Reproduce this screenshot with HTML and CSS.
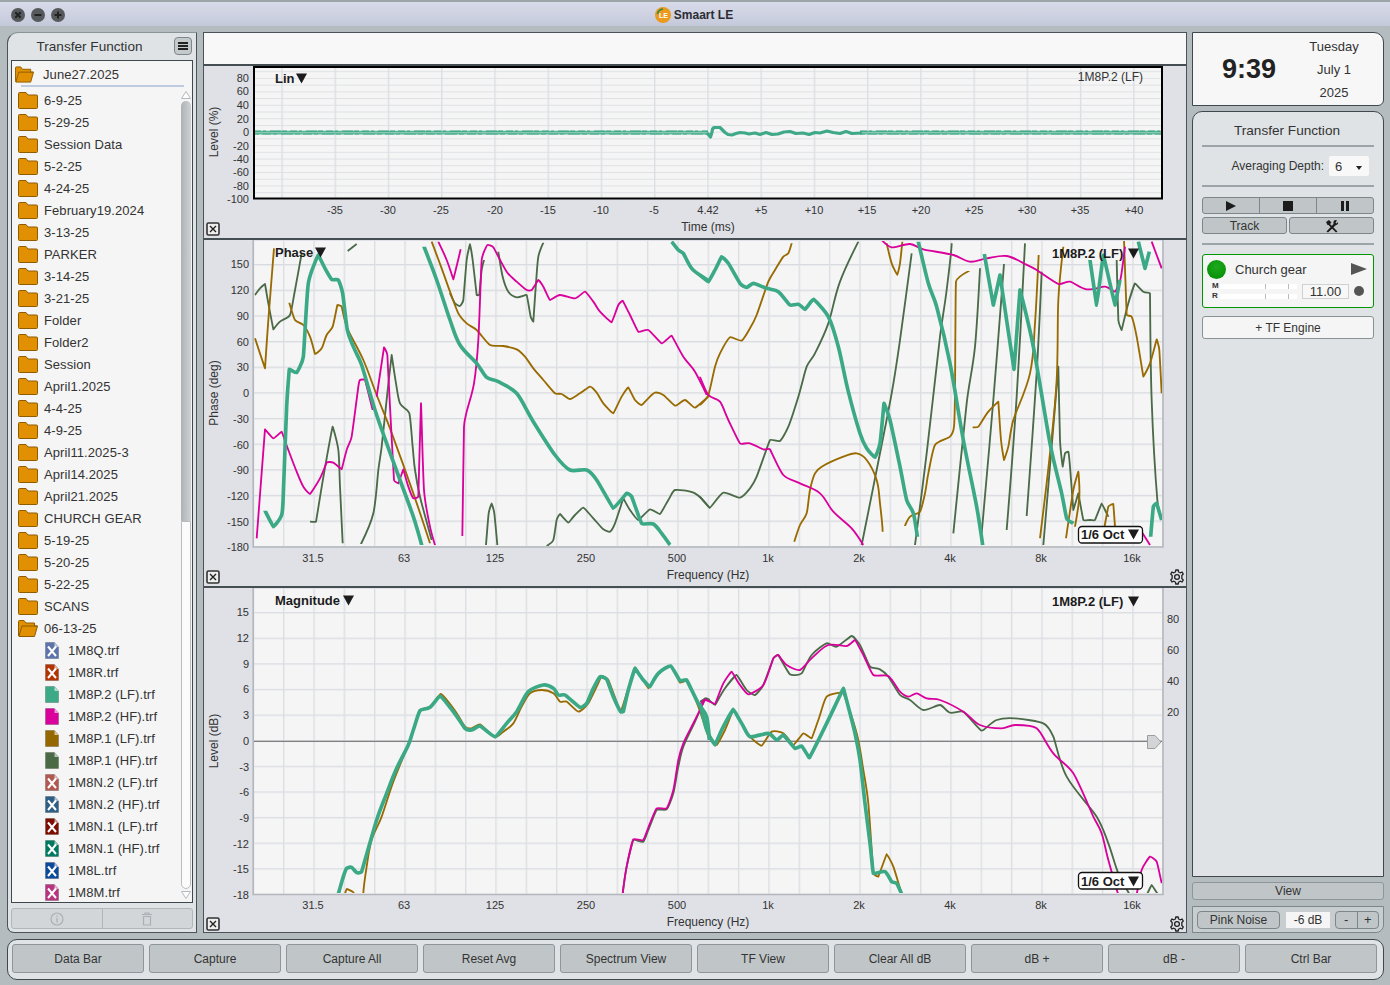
FILE: index.html
```html
<!DOCTYPE html>
<html lang="en">
<head>
<meta charset="utf-8">
<title>Smaart LE</title>
<link rel="stylesheet" href="styles.css">
</head>
<body>
<svg class="defs" width="0" height="0" aria-hidden="true">
  <defs>
    <symbol id="folder" viewBox="0 0 20 17"><path d="M.5 3V1.500Q.5.500 1.500.500H8L10 3H18.500Q19.500 3 19.500 4V15.500Q19.500 16.500 18.500 16.500H1.500Q.5 16.500 .5 15.500Z" fill="#e09000" stroke="#8f5c00"/></symbol>
    <symbol id="folder-open" viewBox="0 0 20 17"><path d="M.5 15V1.500Q.5.500 1.500.500H6L8 3H16.500V6H19.500L16.500 16.500H1Z" fill="#e09000" stroke="#8f5c00"/><path d="M1 16L4 6H19.500" fill="none" stroke="#8f5c00"/></symbol>
    <symbol id="file" viewBox="0 0 14 17"><path d="M.5.500H9.500L13.500 5V16.500H.5Z" fill="currentColor" stroke="#0003"/><path d="M9.500.500V5H13.500Z" fill="#fff9"/></symbol>
    <symbol id="filex" viewBox="0 0 14 17"><path d="M.5.500H9.500L13.500 5V16.500H.5Z" fill="currentColor" stroke="#0003"/><path d="M9.500.500V5H13.500Z" fill="#fff9"/><path d="M3 4.500L11 14M11 4.500L3 14" stroke="#fff" stroke-width="2" fill="none"/></symbol>
    <symbol id="gear" viewBox="0 0 16 16"><path d="M6.800 1H9.200L9.600 3Q10.500 3.300 11.200 3.800L13.100 3L14.300 5.100L12.800 6.400Q13 7.200 12.800 9.600L14.300 10.900L13.100 13L11.200 12.200Q10.500 12.700 9.600 13L9.200 15H6.800L6.400 13Q5.500 12.700 4.800 12.200L2.900 13L1.700 10.900L3.200 9.600Q3 8.800 3.200 6.400L1.700 5.100L2.900 3L4.800 3.800Q5.500 3.300 6.400 3Z" fill="none" stroke="#222" stroke-width="1.300" stroke-linejoin="round"/><circle cx="8" cy="8" r="2.400" fill="none" stroke="#222" stroke-width="1.300"/></symbol>
    <symbol id="xbox" viewBox="0 0 14 14"><rect x="1" y="1" width="12" height="12" rx="1.500" fill="#eee" stroke="#333" stroke-width="1.600"/><path d="M4 4L10 10M10 4L4 10" stroke="#222" stroke-width="1.400"/></symbol>
    <symbol id="tri" viewBox="0 0 12 11"><path d="M0 0H12L6 11Z" fill="#1c1c1c"/></symbol>
    <pattern id="v-freq" patternUnits="userSpaceOnUse" x="283" y="0" width="30.33" height="10"><rect width="1.400" height="10" fill="#dcdee3"/></pattern>
    <pattern id="h-phase" patternUnits="userSpaceOnUse" x="0" y="264" width="10" height="25.65"><rect width="10" height="1.400" fill="#d8dbe0"/></pattern>
    <pattern id="h-mag" patternUnits="userSpaceOnUse" x="0" y="612" width="10" height="25.62"><rect width="10" height="1.400" fill="#dcdee3"/></pattern>
    <pattern id="h-time" patternUnits="userSpaceOnUse" x="0" y="71.200" width="10" height="6.720"><rect width="10" height="1" fill="#dfe1e4"/></pattern>
    <pattern id="v-time" patternUnits="userSpaceOnUse" x="281.300" y="0" width="53.240" height="10"><rect width="1.400" height="10" fill="#dcdee3"/></pattern>
    <clipPath id="clip-phase"><rect x="254" y="241" width="908" height="305"/></clipPath>
    <clipPath id="clip-mag"><rect x="254" y="589" width="908" height="304"/></clipPath>
  </defs>
</svg>

<header class="titlebar">
  <div class="lights">
    <svg class="light" viewBox="0 0 14 14"><circle cx="7" cy="7" r="7" fill="#565a5c"/><path d="M4.300 4.300L9.700 9.700M9.700 4.300L4.300 9.700" stroke="#222" stroke-width="2"/></svg>
    <svg class="light" viewBox="0 0 14 14"><circle cx="7" cy="7" r="7" fill="#565a5c"/><path d="M3.500 7H10.500" stroke="#222" stroke-width="2"/></svg>
    <svg class="light" viewBox="0 0 14 14"><circle cx="7" cy="7" r="7" fill="#565a5c"/><path d="M3.500 7H10.500M7 3.500V10.500" stroke="#222" stroke-width="2"/></svg>
  </div>
  <div class="app-title">
    <svg class="logo" viewBox="0 0 16 16"><circle cx="8" cy="8" r="8" fill="#eb9a1c"/><path d="M2.500 7Q3.500 2.500 8 2" fill="none" stroke="#2e8a4a" stroke-width="1.600"/><text x="8.500" y="11" class="logo-text">LE</text></svg>
    <span>Smaart LE</span>
  </div>
</header>

<main class="workspace">
  <aside class="browser">
    <div class="browser-head">
      <h2 class="browser-title">Transfer Function</h2>
      <button class="menu-btn" aria-label="Menu"><i></i><i></i><i></i></button>
    </div>
    <div class="listbox">
      <div class="current"><svg class="ico-folder"><use href="#folder-open"/></svg><span>June27.2025</span></div>
      <div class="rows">
        <div class="row"><svg class="ico-folder"><use href="#folder"/></svg>6-9-25</div>
        <div class="row"><svg class="ico-folder"><use href="#folder"/></svg>5-29-25</div>
        <div class="row"><svg class="ico-folder"><use href="#folder"/></svg>Session Data</div>
        <div class="row"><svg class="ico-folder"><use href="#folder"/></svg>5-2-25</div>
        <div class="row"><svg class="ico-folder"><use href="#folder"/></svg>4-24-25</div>
        <div class="row"><svg class="ico-folder"><use href="#folder"/></svg>February19.2024</div>
        <div class="row"><svg class="ico-folder"><use href="#folder"/></svg>3-13-25</div>
        <div class="row"><svg class="ico-folder"><use href="#folder"/></svg>PARKER</div>
        <div class="row"><svg class="ico-folder"><use href="#folder"/></svg>3-14-25</div>
        <div class="row"><svg class="ico-folder"><use href="#folder"/></svg>3-21-25</div>
        <div class="row"><svg class="ico-folder"><use href="#folder"/></svg>Folder</div>
        <div class="row"><svg class="ico-folder"><use href="#folder"/></svg>Folder2</div>
        <div class="row"><svg class="ico-folder"><use href="#folder"/></svg>Session</div>
        <div class="row"><svg class="ico-folder"><use href="#folder"/></svg>April1.2025</div>
        <div class="row"><svg class="ico-folder"><use href="#folder"/></svg>4-4-25</div>
        <div class="row"><svg class="ico-folder"><use href="#folder"/></svg>4-9-25</div>
        <div class="row"><svg class="ico-folder"><use href="#folder"/></svg>April11.2025-3</div>
        <div class="row"><svg class="ico-folder"><use href="#folder"/></svg>April14.2025</div>
        <div class="row"><svg class="ico-folder"><use href="#folder"/></svg>April21.2025</div>
        <div class="row"><svg class="ico-folder"><use href="#folder"/></svg>CHURCH GEAR</div>
        <div class="row"><svg class="ico-folder"><use href="#folder"/></svg>5-19-25</div>
        <div class="row"><svg class="ico-folder"><use href="#folder"/></svg>5-20-25</div>
        <div class="row"><svg class="ico-folder"><use href="#folder"/></svg>5-22-25</div>
        <div class="row"><svg class="ico-folder"><use href="#folder"/></svg>SCANS</div>
        <div class="row"><svg class="ico-folder"><use href="#folder-open"/></svg>06-13-25</div>
        <div class="row file"><svg class="ico-file f1"><use href="#filex"/></svg>1M8Q.trf</div>
        <div class="row file"><svg class="ico-file f2"><use href="#filex"/></svg>1M8R.trf</div>
        <div class="row file"><svg class="ico-file f3"><use href="#file"/></svg>1M8P.2 (LF).trf</div>
        <div class="row file"><svg class="ico-file f4"><use href="#file"/></svg>1M8P.2 (HF).trf</div>
        <div class="row file"><svg class="ico-file f5"><use href="#file"/></svg>1M8P.1 (LF).trf</div>
        <div class="row file"><svg class="ico-file f6"><use href="#file"/></svg>1M8P.1 (HF).trf</div>
        <div class="row file"><svg class="ico-file f7"><use href="#filex"/></svg>1M8N.2 (LF).trf</div>
        <div class="row file"><svg class="ico-file f8"><use href="#filex"/></svg>1M8N.2 (HF).trf</div>
        <div class="row file"><svg class="ico-file f9"><use href="#filex"/></svg>1M8N.1 (LF).trf</div>
        <div class="row file"><svg class="ico-file f10"><use href="#filex"/></svg>1M8N.1 (HF).trf</div>
        <div class="row file"><svg class="ico-file f11"><use href="#filex"/></svg>1M8L.trf</div>
        <div class="row file"><svg class="ico-file f12"><use href="#filex"/></svg>1M8M.trf</div>
      </div>
      <div class="scrollbar">
        <svg class="sc-arrow" viewBox="0 0 10 8"><path d="M5 .5L9.500 7.500H.5Z" fill="#fff" stroke="#b5babd"/></svg>
        <div class="sc-thumb"></div>
        <div class="sc-track"></div>
        <svg class="sc-arrow" viewBox="0 0 10 8"><path d="M5 7.500L9.500 .5H.5Z" fill="#fff" stroke="#b5babd"/></svg>
      </div>
    </div>
    <div class="browser-actions">
      <div class="action"><svg class="act-ico" viewBox="0 0 14 14"><circle cx="7" cy="7" r="6" fill="none" stroke="#aab0b3" stroke-width="1.200"/><path d="M7 6V10.500M7 3.400V4.800" stroke="#aab0b3" stroke-width="1.300"/></svg></div>
      <div class="action"><svg class="act-ico" viewBox="0 0 14 14"><path d="M2 2.500H12M5 2.500V1H9V2.500M3.500 4.500V13H10.500V4.500Z" fill="none" stroke="#aab0b3" stroke-width="1.200"/></svg></div>
    </div>
  </aside>

  <section class="charts">
    <div class="strip"></div>

    <div class="chart chart-time">
      <svg class="plot" viewBox="204 66 983 172" width="983" height="172">
        <rect x="254" y="67" width="908" height="131" fill="#f5f5f5"/>
        <rect x="254" y="67" width="908" height="131" fill="url(#h-time)"/>
        <rect x="254" y="67" width="908" height="131" fill="url(#v-time)"/>
        <path class="t-band" d="M254 132.600H708M860 132.600H1162"/>
        <path class="t-noise" d="M254 131.200H708M860 131.200H1162"/>
        <path class="t-noise2" d="M254 134H708M860 134H1162"/>
        <path class="t-core" d="M254 132.700H708M860 132.700H1162"/>
        <path class="t-jag" d="M707 133L709 135L710.500 137L712 132L712.500 129L714 127.500L720 127.500L722 129.500L725 132.500L728 134.500L732 135L736 133.500L740 132.500L745 133L749 134L755 133L760 134.500L766 132.500L772 134.500L778 134L784 132L790 131.500L796 133.500L803 133L809 134.500L815 132.500L820 133L827 131L833 132.500L840 133.500L846 131.500L852 133.500L862 133"/>
        <rect x="254" y="67" width="908" height="131.500" fill="none" stroke="#000" stroke-width="2"/>
        <g class="ax end">
          <text x="249" y="82">80</text><text x="249" y="95">60</text><text x="249" y="109">40</text><text x="249" y="123">20</text><text x="249" y="136">0</text><text x="249" y="150">-20</text><text x="249" y="163">-40</text><text x="249" y="176">-60</text><text x="249" y="190">-80</text><text x="249" y="203">-100</text>
        </g>
        <g class="ax mid">
          <text x="335" y="214">-35</text><text x="388" y="214">-30</text><text x="441" y="214">-25</text><text x="495" y="214">-20</text><text x="548" y="214">-15</text><text x="601" y="214">-10</text><text x="654" y="214">-5</text><text x="708" y="214">4.42</text><text x="761" y="214">+5</text><text x="814" y="214">+10</text><text x="867" y="214">+15</text><text x="921" y="214">+20</text><text x="974" y="214">+25</text><text x="1027" y="214">+30</text><text x="1080" y="214">+35</text><text x="1134" y="214">+40</text>
        </g>
        <text class="title mid" x="708" y="231">Time (ms)</text>
        <text class="title mid" transform="translate(218 132) rotate(-90)">Level (%)</text>
        <text class="head" x="275" y="83">Lin</text>
        <use href="#tri" x="296" y="73" width="11" height="11"/>
        <text class="small-head end" x="1143" y="81">1M8P.2 (LF)</text>
        <use href="#xbox" x="206" y="222" width="14" height="14"/>
      </svg>
    </div>

    <div class="chart chart-phase">
      <svg class="plot" viewBox="204 240 983 346" width="983" height="346">
        <rect x="254" y="241" width="908" height="305" fill="#f5f5f5"/>
        <rect x="254" y="241" width="908" height="305" fill="url(#h-phase)"/>
        <rect x="254" y="241" width="908" height="305" fill="url(#v-freq)"/>
        <path d="M253.200 240V547H1163V240" fill="none" stroke="#b4b8bd" stroke-width="1.600"/>
        <g clip-path="url(#clip-phase)">
          <g transform="translate(250 240) scale(.33333)">
            <g class="c-d">
              <polyline points="15,165 30,145 45,132 55,190 70,268 90,245 120,225 135,150 155,40"/>
              <polyline points="293,33 320,12"/>
              <polyline points="180,845 198,845 222,700 248,560 265,630 270,740 278,910"/>
              <polyline points="333,912 370,820 385,690 395,620 412,460 425,345 438,430 450,490 478,520 488,620 495,690 510,770 545,900"/>
              <polyline points="600,160 615,190 630,198 640,180 650,60 660,12 668,60 680,165 688,165 695,90 702,60"/>
              <polyline points="745,35 758,110 775,155 800,172 830,165 842,230 850,245 858,130 865,50 880,8"/>
              <polyline points="708,915 716,820 725,790 733,820 742,915"/>
              <polyline points="890,918 910,900 920,840 930,822 955,848 975,825 1000,803 1030,835 1060,868 1080,875 1095,850 1120,775 1140,810 1165,840 1200,808 1230,822 1255,780 1275,750 1335,760 1380,805"/>
            </g>
            <g class="c-b">
              <polyline points="15,295 45,385 55,240 72,25"/>
              <polyline points="118,188 135,240 160,255 180,290 195,342 215,325 230,285 248,260 262,195 275,200 292,265 340,360 380,465 420,565 490,760 540,910"/>
              <polyline points="545,5 575,85 600,155 625,220 650,250 680,270 720,315 760,318 800,328 825,350 850,385 880,420 915,460 935,462 960,477 990,460 1020,440 1040,458 1060,490 1090,520 1115,470 1135,442 1155,480 1175,495 1195,475 1215,458 1240,465 1275,497 1305,480 1335,503 1380,465"/>
            </g>
            <g class="c-m">
              <polyline points="20,895 45,568 70,595 95,575 115,630 140,695 160,740 180,762 210,715 230,668 250,668 275,688 290,630 305,590 325,440 330,420 345,420 368,510"/>
              <polyline points="380,470 402,322 412,345 420,500 432,720 445,730 460,688 475,740 490,775 505,770 513,490 522,750 540,860 555,915"/>
              <polyline points="565,5 590,60 610,118 622,70 632,28"/>
              <polyline points="637,888 642,560 650,515 672,430 685,300 695,60 712,15 730,22 770,95 800,125 830,150 845,150 865,120 880,140 900,180 930,165 975,175 1005,155 1030,185 1050,215 1085,247 1105,195 1118,182 1140,225 1165,275 1195,270 1235,310 1265,287 1300,350 1335,395 1370,465"/>
            </g>
            <g class="c-g">
              <polyline points="45,812 70,860 95,825 100,760 110,500 118,388 140,398 160,350 175,130 205,45 225,85 245,118 265,120 278,160 292,270 310,320 335,375 375,510 410,610 450,720 490,830 515,915"/>
              <polyline points="522,20 560,120 600,240 630,315 680,370 710,412 745,425 800,460 850,545 915,645 960,690 1010,690 1040,720 1090,805 1130,760 1145,770 1175,850 1210,852 1235,880 1260,915"/>
              <polyline points="1265,5 1285,30 1300,40 1325,85 1360,112 1380,125"/>
            </g>
          </g>
          <g transform="translate(700 240) scale(.33333)">
            <g class="c-d">
              <polyline points="0,770 30,803 70,758 120,773 150,745 170,710 210,600 240,603 265,560 295,470 320,380 345,340 385,250 420,125 475,5"/>
              <polyline points="485,915 530,690 575,460 600,300 635,40"/>
              <polyline points="645,915 680,640 720,290 740,150 755,10"/>
              <polyline points="760,880 800,490 825,320 840,85"/>
              <polyline points="845,880 880,480 912,72"/>
              <polyline points="920,870 950,470 975,10"/>
              <polyline points="980,828 1010,400 1025,95"/>
              <polyline points="1030,915 1060,560 1075,380 1080,600 1088,680 1095,640 1105,635 1110,680 1120,810 1135,760 1150,840 1170,840 1185,840 1205,790 1225,830"/>
              <polyline points="1250,60 1255,240 1265,270 1285,190 1305,130 1330,155 1350,160 1355,480 1372,780 1385,840"/>
            </g>
            <g class="c-b">
              <polyline points="0,495 25,465 45,380 60,340 90,292 125,302 150,265 170,225 205,125 225,90 250,50 265,40 275,10"/>
              <polyline points="283,905 300,855 320,820 330,750 345,700 365,680 430,650 470,640 500,660 530,720 540,790 548,875"/>
              <polyline points="560,10 575,70 592,105 600,70 607,5"/>
              <polyline points="615,858 630,830 660,815 675,760 685,700 705,615 750,590 762,560 765,460 768,125 808,92"/>
              <polyline points="818,562 835,560 865,515 895,485 903,600 912,660 925,620 940,540 990,400 1005,250 1016,45"/>
              <polyline points="1020,895 1050,640 1070,420 1075,180 1090,20"/>
              <polyline points="1098,895 1120,750 1135,695 1138,770 1125,860"/>
              <polyline points="1210,880 1225,800 1240,792 1245,860"/>
              <polyline points="1272,0 1280,225 1295,230 1310,290 1330,410 1350,370 1370,298 1378,330 1385,460"/>
            </g>
            <g class="c-m">
              <polyline points="0,410 25,465 60,485 85,540 120,610 150,610 190,628 210,628 250,705 300,730 360,760 400,815 455,865 490,915"/>
              <polyline points="545,0 575,22 630,12 670,28 760,45 810,65 860,55 920,48 975,72 1010,90 1075,132 1110,125 1160,148 1215,140 1245,155 1262,115 1275,20"/>
              <polyline points="1355,5 1385,85"/>
              <polyline points="1315,860 1350,915"/>
            </g>
            <g class="c-g">
              <polyline points="0,105 25,125 45,90 65,50 85,70 120,130 140,142 160,130 200,145 235,155 270,195 295,193 315,208 340,178 385,230 415,320 445,455 480,580 500,625 525,652 540,610 552,490 570,540 600,680 620,780 640,820 652,890"/>
              <polyline points="655,5 685,130 710,200 750,370 790,600 830,800 848,915"/>
              <polyline points="853,42 880,195 900,105 942,388 960,150 1000,320 1050,610 1085,760 1100,835 1120,850"/>
              <polyline points="1170,60 1190,195 1210,45 1245,195 1260,120"/>
              <polyline points="1315,5 1335,85 1348,35"/>
              <polyline points="1352,890 1360,800 1370,790 1385,840"/>
            </g>
          </g>
        </g>
        <g class="ax end">
          <text x="249" y="268">150</text><text x="249" y="294">120</text><text x="249" y="320">90</text><text x="249" y="346">60</text><text x="249" y="371">30</text><text x="249" y="397">0</text><text x="249" y="423">-30</text><text x="249" y="449">-60</text><text x="249" y="474">-90</text><text x="249" y="500">-120</text><text x="249" y="526">-150</text><text x="249" y="551">-180</text>
        </g>
        <g class="ax mid">
          <text x="313" y="562">31.5</text><text x="404" y="562">63</text><text x="495" y="562">125</text><text x="586" y="562">250</text><text x="677" y="562">500</text><text x="768" y="562">1k</text><text x="859" y="562">2k</text><text x="950" y="562">4k</text><text x="1041" y="562">8k</text><text x="1132" y="562">16k</text>
        </g>
        <text class="title mid" x="708" y="579">Frequency (Hz)</text>
        <text class="title mid" transform="translate(218 393) rotate(-90)">Phase (deg)</text>
        <text class="head" x="275" y="257">Phase</text>
        <use href="#tri" x="315" y="247" width="11" height="11"/>
        <text class="head" x="1052" y="258">1M8P.2 (LF)</text>
        <use href="#tri" x="1128" y="248" width="11" height="11"/>
        <rect class="badge" x="1078.500" y="526.500" width="64" height="16.500" rx="3.500"/>
        <text class="head" x="1081" y="539">1/6 Oct</text>
        <use href="#tri" x="1128" y="529" width="11" height="11"/>
        <use href="#xbox" x="206" y="570" width="14" height="14"/>
        <use href="#gear" x="1169" y="569" width="16" height="16"/>
      </svg>
    </div>

    <div class="chart chart-mag">
      <svg class="plot" viewBox="204 588 983 344" width="983" height="344">
        <rect x="254" y="589" width="908" height="305" fill="#f5f5f5"/>
        <rect x="254" y="589" width="908" height="305" fill="url(#h-mag)"/>
        <rect x="254" y="589" width="908" height="305" fill="url(#v-freq)"/>
        <path d="M253.200 588V894.500H1163V588" fill="none" stroke="#b4b8bd" stroke-width="1.600"/>
        <path d="M254 741.300H1162" stroke="#666" stroke-width="1" fill="none"/>
        <g clip-path="url(#clip-mag)">
          <g transform="translate(250 590) scale(.33333)">
            <g class="c-b">
              <polyline points="285,912 290,897 308,905 312,912"/>
              <polyline points="340,912 350,830 365,750 395,680 430,575 475,465 490,420 510,360 540,350 572,312 612,358 645,410 665,415 690,403 735,442 760,425 790,400 815,350 840,310 875,300 910,310 930,335 950,335 985,365 1015,340 1055,258 1075,270 1112,368 1155,232 1195,295 1225,250 1262,228 1290,278 1310,272 1345,350 1378,450"/>
            </g>
            <g class="c-d"><polyline points="1118,912 1130,830 1150,750 1180,755 1195,720 1220,660 1250,658 1270,610 1285,530 1300,470 1335,395 1365,325 1380,330"/></g>
            <g class="c-m"><polyline points="1118,912 1130,830 1150,748 1180,750 1200,700 1220,655 1250,655 1270,600 1285,510 1300,460 1335,390 1365,330 1380,335"/></g>
            <g class="c-g"><polyline points="265,912 280,860 290,835 305,832 320,848 335,845 380,690 410,610 440,535 475,465 490,420 510,362 540,352 570,318 610,365 645,415 665,420 690,408 735,440 770,400 800,365 835,305 880,285 910,295 925,315 945,315 990,352 1010,340 1030,295 1050,260 1070,268 1090,320 1112,365 1120,365 1135,300 1155,235 1180,270 1200,290 1225,250 1262,228 1290,272 1310,270 1345,340 1370,380 1378,450"/></g>
          </g>
          <g transform="translate(700 590) scale(.33333)">
            <g class="c-b"><polyline points="0,355 25,430 50,465 75,420 100,358 125,400 150,440 185,467 215,425 250,430 280,465 310,430 335,445 355,390 380,320 430,310 470,430 490,540 505,640 520,850 535,860 560,792 580,830 605,912"/></g>
            <g class="c-d">
              <polyline points="0,335 20,325 45,345 75,295 110,255 140,300 165,315 190,285 220,205 235,195 270,253 305,250 335,195 380,160 410,170 455,138 480,165 510,230 540,238 565,260 600,315 630,330 670,360 720,345 750,368 790,365 845,422 890,390 945,385 1030,400 1060,440 1100,560 1190,680 1225,760 1255,850 1290,915"/>
              <polyline points="1340,915 1355,885 1375,915"/>
            </g>
            <g class="c-m">
              <polyline points="0,345 15,328 45,342 70,280 95,245 120,285 145,313 190,285 220,205 235,195 260,225 300,240 340,200 385,165 440,168 465,150 490,195 520,255 565,258 600,305 625,320 650,310 680,325 720,330 790,365 840,405 905,415 945,405 1010,415 1060,490 1120,550 1180,680 1205,730 1225,810 1255,915"/>
              <polyline points="1310,915 1325,840 1350,800 1370,815 1385,880"/>
            </g>
            <g class="c-g"><polyline points="0,340 20,420 45,465 70,410 100,358 125,400 150,440 205,430 230,450 250,435 285,475 305,468 328,503 380,400 430,295 450,370 465,430 480,510 495,640 510,760 520,850 555,845 575,875 590,880 605,912"/></g>
          </g>
        </g>
        <g class="ax end">
          <text x="249" y="616">15</text><text x="249" y="642">12</text><text x="249" y="668">9</text><text x="249" y="693">6</text><text x="249" y="719">3</text><text x="249" y="745">0</text><text x="249" y="771">-3</text><text x="249" y="796">-6</text><text x="249" y="822">-9</text><text x="249" y="848">-12</text><text x="249" y="873">-15</text><text x="249" y="899">-18</text>
        </g>
        <g class="ax">
          <text x="1167" y="623">80</text><text x="1167" y="654">60</text><text x="1167" y="685">40</text><text x="1167" y="716">20</text>
        </g>
        <g class="ax mid">
          <text x="313" y="909">31.5</text><text x="404" y="909">63</text><text x="495" y="909">125</text><text x="586" y="909">250</text><text x="677" y="909">500</text><text x="768" y="909">1k</text><text x="859" y="909">2k</text><text x="950" y="909">4k</text><text x="1041" y="909">8k</text><text x="1132" y="909">16k</text>
        </g>
        <text class="title mid" x="708" y="926">Frequency (Hz)</text>
        <text class="title mid" transform="translate(218 741) rotate(-90)">Level (dB)</text>
        <text class="head" x="275" y="605">Magnitude</text>
        <use href="#tri" x="343" y="595" width="11" height="11"/>
        <text class="head" x="1052" y="606">1M8P.2 (LF)</text>
        <use href="#tri" x="1128" y="596" width="11" height="11"/>
        <path d="M1147.500 735.500H1155L1161 742L1155 748.500H1147.500Z" fill="#d2d4d6" stroke="#9a9da0"/>
        <rect class="badge" x="1078.500" y="872.500" width="64" height="16.500" rx="3.500"/>
        <text class="head" x="1081" y="886">1/6 Oct</text>
        <use href="#tri" x="1128" y="876" width="11" height="11"/>
        <use href="#xbox" x="206" y="917" width="14" height="14"/>
        <use href="#gear" x="1169" y="916" width="16" height="16"/>
      </svg>
    </div>
  </section>

  <aside class="side">
    <div class="clock">
      <div class="time">9:39</div>
      <div class="date"><span>Tuesday</span><span>July 1</span><span>2025</span></div>
    </div>
    <div class="tf-panel">
      <h2 class="tf-title">Transfer Function</h2>
      <div class="depth">
        <span>Averaging Depth:</span>
        <div class="select"><span>6</span><svg class="caret" viewBox="0 0 6 4"><path d="M0 0H6L3 4Z" fill="#222"/></svg></div>
      </div>
      <div class="transport">
        <button class="seg" aria-label="Play"><svg class="t-ico" viewBox="0 0 10 10"><path d="M0 0L10 5L0 10Z" fill="#1c1c1c"/></svg></button>
        <button class="seg" aria-label="Stop"><svg class="t-ico" viewBox="0 0 10 10"><path d="M0 0H10V10H0Z" fill="#1c1c1c"/></svg></button>
        <button class="seg" aria-label="Pause"><svg class="t-ico" viewBox="0 0 10 10"><path d="M1 0H4V10H1ZM6 0H9V10H6Z" fill="#1c1c1c"/></svg></button>
      </div>
      <div class="track-row">
        <button class="btn-sm">Track</button>
        <button class="btn-sm" aria-label="Tools"><svg class="tool-ico" viewBox="0 0 14 14"><path d="M1 3L4 1L6.500 3.500L5 5L12.500 12.500L11 13.500L3.500 6L2.500 6ZM9 1.500Q11 .5 12 1.500L10.500 3.500L11.500 4.500L13 3Q13.500 5.500 11 6L3 13.500L1.500 12.500L8.500 5Q8 3 9 1.500Z" fill="#1c1c1c"/></svg></button>
      </div>
      <div class="engine">
        <div class="engine-top">
          <span class="led"></span>
          <span class="engine-name">Church gear</span>
          <svg class="engine-play" viewBox="0 0 16 12"><path d="M0 0L16 6L0 12Z" fill="#555"/></svg>
        </div>
        <div class="engine-bottom">
          <div class="meters">
            <div class="meter"><b>M</b><i></i></div>
            <div class="meter"><b>R</b><i></i></div>
          </div>
          <div class="value">11.00</div>
          <span class="dot"></span>
        </div>
      </div>
      <button class="add-engine">+ TF Engine</button>
    </div>
    <button class="view-btn">View</button>
    <div class="noise">
      <button class="noise-btn">Pink Noise</button>
      <div class="noise-val">-6 dB</div>
      <div class="stepper"><button>-</button><button>+</button></div>
    </div>
  </aside>
</main>

<footer class="bottombar">
  <button>Data Bar</button><button>Capture</button><button>Capture All</button><button>Reset Avg</button><button>Spectrum View</button><button>TF View</button><button>Clear All dB</button><button>dB +</button><button>dB -</button><button>Ctrl Bar</button>
</footer>
<script src="charts.js"></script>
</body>
</html>
```
FILE: styles.css
```css
* { box-sizing: border-box; }
html, body { margin: 0; padding: 0; }
body {
  width: 1390px;
  height: 985px;
  overflow: hidden;
  background: #b4bcbf;
  font-family: "Liberation Sans", Arial, sans-serif;
  color: #333;
  font-size: 13px;
  display: flex;
  flex-direction: column;
}
button { font: inherit; color: inherit; padding: 0; cursor: default; }
.defs { position: absolute; }

/* Title bar */
.titlebar {
  height: 26px;
  flex: none;
  position: relative;
  background: linear-gradient(#d8dbe9, #c4c9da);
  border-top: 2px solid #9ea5a8;
  display: flex;
  align-items: center;
  justify-content: center;
  padding-top: 2px;
}
.lights { position: absolute; left: 11px; top: 6px; display: flex; gap: 6px; }
.light { width: 14px; height: 14px; display: block; }
.app-title { display: flex; align-items: center; gap: 3px; font-weight: 700; font-size: 12px; color: #2c2c34; margin-left: -2px; }
.logo { width: 16px; height: 16px; }
.logo-text { font-size: 7px; font-weight: 700; fill: #fff; text-anchor: middle; }

/* Workspace */
.workspace {
  height: 901px;
  margin-top: 6px;
  padding-left: 7px;
  display: flex;
  flex: none;
}

/* Browser */
.browser {
  width: 190px;
  flex: none;
  background: #dfe3e6;
  border: 1px solid #4a5458;
  border-top-color: #8a9497;
  border-radius: 11px 0 0 7px;
  padding: 0 3px;
  display: flex;
  flex-direction: column;
}
.browser-head { height: 27px; display: flex; align-items: center; position: relative; flex: none; }
.browser-title { margin: 0; width: 157px; text-align: center; font-size: 13.600px; font-weight: 400; color: #333; }
.menu-btn {
  position: absolute; right: 1px; top: 4px;
  width: 18px; height: 18px;
  border: 1px solid #7d8689; border-radius: 4px; background: #c4cacc;
  display: flex; flex-direction: column; align-items: center; justify-content: center; gap: 1.500px;
}
.menu-btn i { display: block; width: 10px; height: 1.500px; background: #222; }
.listbox {
  height: 843px;
  flex: none;
  background: #f5f5f5;
  border: 1px solid #3f484c;
  position: relative;
  overflow: hidden;
  padding: 0 0 0 1px;
  letter-spacing: .08px;
}
.current {
  height: 26px;
  display: flex;
  align-items: center;
  gap: 9px;
  padding-left: 2px;
  position: relative;
  margin-bottom: 2px;
}
.current::after { content: ""; position: absolute; left: 8px; right: 8px; bottom: 0; height: 2px; background: #bfcbe0; }
.current .ico-folder { width: 19px; }
.rows { padding-left: 5px; }
.row { height: 22px; display: flex; align-items: center; gap: 6px; white-space: nowrap; color: #333; }
.row.file { padding-left: 27px; gap: 9px; }
.ico-folder { width: 20px; height: 17px; flex: none; }
.ico-file { width: 14px; height: 17px; flex: none; }
.f1 { color: #5d74ad; }
.f2 { color: #b33400; }
.f3 { color: #3caa86; }
.f4 { color: #d9009c; }
.f5 { color: #946700; }
.f6 { color: #4a6a45; }
.f7 { color: #b25a52; }
.f8 { color: #2f5f85; }
.f9 { color: #7f0d00; }
.f10 { color: #007a60; }
.f11 { color: #0c4a9c; }
.f12 { color: #b83480; }
.scrollbar {
  position: absolute; right: 1px; top: 30px; bottom: 1px; width: 10px;
  display: flex; flex-direction: column; align-items: center;
}
.sc-arrow { width: 10px; height: 8px; flex: none; margin: 0 0 2px; }
.sc-thumb { width: 10px; height: 420px; flex: none; background: linear-gradient(90deg, #aeb2b5, #cfd2d3); border-radius: 5px 5px 0 0; }
.sc-track { width: 10px; flex: 1; background: #fbfbfb; border: 1px solid #b9bdc0; border-radius: 0 0 5px 5px; margin-bottom: 2px; }
.browser-actions {
  margin-top: 5px;
  height: 21px;
  display: flex;
  border: 1px solid #b0b6b9;
  border-radius: 3px;
  background: #d2d6d9;
  flex: none;
}
.action { flex: 1; display: flex; align-items: center; justify-content: center; }
.action + .action { border-left: 1px solid #b0b6b9; }
.act-ico { width: 14px; height: 14px; }

/* Charts */
.charts {
  width: 984px;
  flex: none;
  margin-left: 6px;
  background: #dfe1e6;
  border: 1px solid #4a5458;
  display: flex;
  flex-direction: column;
  overflow: hidden;
}
.strip { height: 33px; background: #f8f8f8; border-bottom: 2px solid #454e52; flex: none; }
.chart { flex: none; }
.chart-time, .chart-phase { border-bottom: 2px solid #454e52; }
.chart-time { height: 174px; }
.chart-phase { height: 348px; }
.chart-mag { height: 344px; }
.plot { display: block; }
.ax { font-size: 11px; fill: #333; }
.end { text-anchor: end; }
.mid { text-anchor: middle; }
.title { font-size: 12px; fill: #333; }
.head { font-size: 13px; font-weight: 700; fill: #1c1c1c; }
.small-head { font-size: 12px; fill: #333; }
.badge { fill: #fff; stroke: #111; stroke-width: 1.300; }
polyline, .trace { fill: none; stroke-linejoin: round; stroke-linecap: butt; }
.c-g { stroke: #3ca986; stroke-width: 11; }
.c-m { stroke: #d9009c; stroke-width: 5.500; }
.c-b { stroke: #986a00; stroke-width: 5.500; }
.c-d { stroke: #4a6a48; stroke-width: 5.500; }
.t-band { fill: none; stroke: #3fa987; stroke-width: 3.800; opacity: .85; }
.t-noise { fill: none; stroke: #3fa987; stroke-width: 1.200; stroke-dasharray: 7 2 3 4 11 1 5 3; }
.t-noise2 { fill: none; stroke: #3fa987; stroke-width: 1.200; stroke-dasharray: 5 3 9 2 4 4 12 2; }
.t-core { fill: none; stroke: #cfe8de; stroke-width: .7; opacity: .7; }
.t-jag { fill: none; stroke: #3fa987; stroke-width: 3.200; stroke-linejoin: round; }

/* Side */
.side { width: 192px; flex: none; margin-left: 5px; display: flex; flex-direction: column; }
.clock {
  height: 74px; flex: none;
  background: #f7f7f7;
  border: 1px solid #3f484c;
  border-radius: 0 10px 6px 0;
  display: flex;
  align-items: center;
}
.time { width: 112px; text-align: center; font-size: 27px; font-weight: 700; color: #222; }
.date { width: 58px; margin-top: 1px; display: flex; flex-direction: column; align-items: center; gap: 8px; font-size: 13px; line-height: 15px; }
.tf-panel {
  margin-top: 5px;
  height: 766px; flex: none;
  background: #dfe3e6;
  border: 1px solid #3f484c;
  border-radius: 10px 10px 0 0;
  padding: 0 9px;
}
.tf-title { margin: 0; height: 35px; line-height: 37px; text-align: center; font-size: 13.600px; font-weight: 400; border-bottom: 2px solid #9da4a7; padding-right: 2px; }
.depth { height: 40px; display: flex; align-items: center; justify-content: flex-end; gap: 5px; padding-right: 5px; border-bottom: 2px solid #9da4a7; font-size: 12px; }
.select { width: 40px; height: 20px; background: #f8f8f8; border-radius: 2px; display: flex; align-items: center; justify-content: space-between; padding: 0 7px 0 6px; font-size: 13px; }
.caret { width: 6px; height: 4px; margin-top: 4px; }
.transport { margin-top: 10px; height: 17px; display: flex; border: 1px solid #7d8689; border-radius: 3px; background: #c0c6c8; }
.seg { flex: 1; border: 0; background: none; display: flex; align-items: center; justify-content: center; }
.seg + .seg { border-left: 1px solid #7d8689; }
.t-ico { width: 10px; height: 10px; }
.track-row { margin-top: 3px; height: 28px; display: flex; gap: 2px; border-bottom: 2px solid #9da4a7; padding-bottom: 10px; }
.btn-sm { flex: 1; height: 17px; border: 1px solid #7d8689; border-radius: 3px; background: #c0c6c8; font-size: 12px; display: flex; align-items: center; justify-content: center; }
.tool-ico { width: 14px; height: 14px; }
.engine { margin-top: 9px; height: 54px; background: #f5f5f5; border: 1px solid #009600; border-radius: 3px; padding: 4px 4px 0 4px; }
.engine-top { display: flex; align-items: center; height: 20px; }
.led { width: 19px; height: 19px; border-radius: 50%; background: radial-gradient(circle at 50% 35%, #1eaa1e, #008a00); flex: none; }
.engine-name { margin-left: 9px; flex: 1; font-size: 13px; }
.engine-play { width: 16px; height: 12px; margin-right: 2px; }
.engine-bottom { display: flex; align-items: center; margin-top: 2px; height: 20px; }
.meters { width: 95px; flex: none; padding-left: 5px; }
.meter { display: flex; align-items: center; height: 10px; }
.meter b { width: 8px; font-size: 8px; line-height: 8px; color: #333; }
.meter i {
  display: block; width: 77px; height: 5px;
  background:
    linear-gradient(#b8bcbf, #b8bcbf) 45px 0 / 1px 100% no-repeat,
    linear-gradient(#b8bcbf, #b8bcbf) 68px 0 / 1px 100% no-repeat,
    #fff;
}
.value { width: 47px; height: 15px; background: #f7f7f7; border: 1px solid #cfd2d4; font-size: 13px; line-height: 14px; text-align: center; flex: none; }
.dot { width: 10px; height: 10px; border-radius: 50%; background: #555; margin-left: 5px; flex: none; }
.add-engine { display: block; width: 172px; margin-top: 8px; height: 23px; background: #f5f5f5; border: 1px solid #8a9296; border-radius: 3px; font-size: 12px; }
.view-btn { margin-top: 5px; height: 18px; flex: none; background: #c0c6c8; border: 1px solid #8e9699; border-radius: 3px; font-size: 12px; }
.noise {
  margin-top: 6px; height: 27px; flex: none;
  background: #c8cdd0;
  border: 1px solid #7d8689;
  border-radius: 0 0 8px 0;
  display: flex; align-items: center; padding: 0 4px;
}
.noise-btn { width: 83px; height: 18px; background: #c0c6c8; border: 1px solid #7d8689; border-radius: 4px; font-size: 12px; flex: none; }
.noise-val { width: 44px; height: 16px; margin-left: 6px; background: #f5f5f5; text-align: center; line-height: 16px; font-size: 12px; flex: none; }
.stepper { width: 44px; height: 18px; margin-left: 5px; display: flex; border: 1px solid #7d8689; border-radius: 4px; background: #c0c6c8; flex: none; }
.stepper button { flex: 1; border: 0; background: none; }
.stepper button + button { border-left: 1px solid #7d8689; }

/* Bottom */
.bottombar {
  margin: 6px 0 0 7px;
  width: 1377px;
  height: 41px;
  flex: none;
  background: #dfe3e6;
  border: 1px solid #3f484c;
  border-radius: 10px;
  padding: 4px;
  display: flex;
  gap: 5px;
}
.bottombar button { width: 132px; height: 29px; background: #c0c6c8; border: 1px solid #8e9699; border-radius: 3px; font-size: 12px; flex: none; }
```
FILE: charts.js
```js
// Turn the measured trace points into smooth curves, as the analyser draws them.
// Handles are limited by the shorter neighbouring chord and shrink at sharp turns,
// so the curves keep their peaks and never overshoot into loops.
document.querySelectorAll('polyline').forEach(function (line) {
  var pts = line.getAttribute('points').trim().split(/\s+/).map(function (p) {
    return p.split(',').map(Number);
  });
  function dist(a, b) { return Math.hypot(b[0] - a[0], b[1] - a[1]) || 1; }
  function handle(prev, cur, next) {
    var a = dist(prev, cur), b = dist(cur, next);
    var cos = ((cur[0] - prev[0]) * (next[0] - cur[0]) + (cur[1] - prev[1]) * (next[1] - cur[1])) / (a * b);
    var soft = Math.max(0.1, (1 + cos) / 2);
    var tx = next[0] - prev[0], ty = next[1] - prev[1], l = Math.hypot(tx, ty) || 1;
    return { x: tx / l, y: ty / l, k: Math.min(a, b) / 2.6 * soft * soft };
  }
  var d = 'M' + pts[0].join(' ');
  for (var i = 0; i < pts.length - 1; i++) {
    var p0 = pts[i - 1] || pts[i], p1 = pts[i], p2 = pts[i + 1], p3 = pts[i + 2] || p2;
    var h1 = handle(p0, p1, p2), h2 = handle(p1, p2, p3);
    d += 'C' + (p1[0] + h1.x * h1.k).toFixed(1) + ' ' + (p1[1] + h1.y * h1.k).toFixed(1) + ' ' +
         (p2[0] - h2.x * h2.k).toFixed(1) + ' ' + (p2[1] - h2.y * h2.k).toFixed(1) + ' ' +
         p2[0] + ' ' + p2[1];
  }
  var path = document.createElementNS('http://www.w3.org/2000/svg', 'path');
  path.setAttribute('class', 'trace');
  path.setAttribute('d', d);
  line.parentNode.replaceChild(path, line);
});
```
